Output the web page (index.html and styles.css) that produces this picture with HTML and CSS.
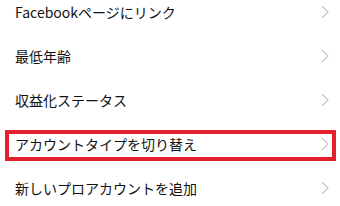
FILE: index.html
```html
<!DOCTYPE html>
<html lang="ja">
  <head>
    <meta charset="UTF-8" />
    <meta name="viewport" content="width=device-width, initial-scale=1.0" />
    <title>設定</title>
    <link rel="stylesheet" href="styles.css">
  </head>
  <body>
    <ul class="menu">
      <li class="menu-row">
        <span class="menu-label">Facebookページにリンク</span>
        <svg class="chevron" viewBox="0 0 8 14"><path d="M1 1l6 6-6 6" /></svg>
      </li>
      <li class="menu-row">
        <span class="menu-label">最低年齢</span>
        <svg class="chevron" viewBox="0 0 8 14"><path d="M1 1l6 6-6 6" /></svg>
      </li>
      <li class="menu-row">
        <span class="menu-label">収益化ステータス</span>
        <svg class="chevron" viewBox="0 0 8 14"><path d="M1 1l6 6-6 6" /></svg>
      </li>
      <li class="menu-row highlighted">
        <span class="menu-label">アカウントタイプを切り替え</span>
        <svg class="chevron" viewBox="0 0 8 14"><path d="M1 1l6 6-6 6" /></svg>
      </li>
      <li class="menu-row">
        <span class="menu-label">新しいプロアカウントを追加</span>
        <svg class="chevron" viewBox="0 0 8 14"><path d="M1 1l6 6-6 6" /></svg>
      </li>
    </ul>
  </body>
</html>
```

FILE: styles.css
```css
body {
  margin: 0;
  background: #fff;
  font-family: "Noto Sans CJK JP", "Noto Sans", sans-serif;
  overflow: hidden;
}

.menu {
  list-style: none;
  margin: -10px 0 0 0;
  padding: 0;
}

.menu-row {
  position: relative;
  height: 44px;
  display: flex;
  align-items: center;
  justify-content: space-between;
  padding: 0 11px 0 15px;
}

.menu-label {
  font-size: 14px;
  color: #111;
}

.chevron {
  width: 8px;
  height: 14px;
  fill: none;
  stroke: #c4c4c8;
  stroke-width: 1.2;
}

/* red annotation frame drawn over the row */
.highlighted::after {
  content: "";
  position: absolute;
  left: 5px;
  right: 4px;
  top: 8px;
  height: 31px;
  border: 4px solid #e3202b;
  box-sizing: border-box;
}
```
